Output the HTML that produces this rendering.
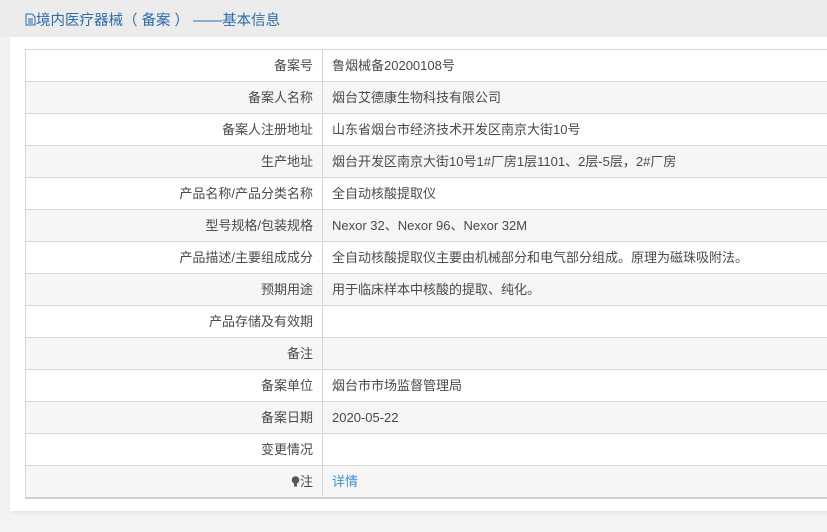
<!DOCTYPE html>
<html><head><meta charset="utf-8"><style>
body{margin:0;width:827px;height:532px;background:#f3f3f3;overflow:hidden;font-family:"Liberation Sans","Noto Sans CJK SC",sans-serif;}
.hd{position:absolute;left:0;top:0;width:827px;height:37px;background:#ececec;}
.hd span{position:absolute;left:25px;top:9px;font-size:14.5px;color:#2b6cb0;}
.panel{position:absolute;left:10px;top:37px;width:830px;height:474px;background:#fff;box-shadow:0 2px 4px rgba(0,0,0,.06);}
table{position:absolute;left:25px;top:49px;border-collapse:collapse;width:830px;font-size:13px;color:#4a4a4a;}
td{height:31px;border:1px solid #d6d6d6;padding:0 9px;line-height:31px;white-space:nowrap;}
td.l{width:278px;text-align:right;}
tr:nth-child(even){background:#f6f6f6;}
tr:last-child td{border-bottom:2px solid #cfcfcf;}
a{color:#3b8fd9;text-decoration:none;}
</style></head><body>
<div class="hd"><span><svg width="11" height="13" viewBox="0 0 11 13" style="vertical-align:-1px"><path d="M1 1h6l3 3v8H1z" fill="none" stroke="#2b6cb0"/><path d="M3 6h5M3 8h5M3 10h5" stroke="#2b6cb0"/></svg>境内医疗器械（ 备案 ） ——基本信息</span></div>
<div class="panel"></div>
<table>
<tr><td class="l">备案号</td><td>鲁烟械备20200108号</td></tr>
<tr><td class="l">备案人名称</td><td>烟台艾德康生物科技有限公司</td></tr>
<tr><td class="l">备案人注册地址</td><td>山东省烟台市经济技术开发区南京大街10号</td></tr>
<tr><td class="l">生产地址</td><td>烟台开发区南京大街10号1#厂房1层1101、2层-5层，2#厂房</td></tr>
<tr><td class="l">产品名称/产品分类名称</td><td>全自动核酸提取仪</td></tr>
<tr><td class="l">型号规格/包装规格</td><td>Nexor 32、Nexor 96、Nexor 32M</td></tr>
<tr><td class="l">产品描述/主要组成成分</td><td>全自动核酸提取仪主要由机械部分和电气部分组成。原理为磁珠吸附法。</td></tr>
<tr><td class="l">预期用途</td><td>用于临床样本中核酸的提取、纯化。</td></tr>
<tr><td class="l">产品存储及有效期</td><td></td></tr>
<tr><td class="l">备注</td><td></td></tr>
<tr><td class="l">备案单位</td><td>烟台市市场监督管理局</td></tr>
<tr><td class="l">备案日期</td><td>2020-05-22</td></tr>
<tr><td class="l">变更情况</td><td></td></tr>
<tr><td class="l"><svg width="9" height="11" viewBox="0 0 9 11" style="vertical-align:-1px"><circle cx="4.5" cy="4" r="3.8" fill="#555"/><rect x="3" y="7.5" width="3" height="3" fill="#555"/></svg>注</td><td><a>详情</a></td></tr>
</table>
</body></html>
